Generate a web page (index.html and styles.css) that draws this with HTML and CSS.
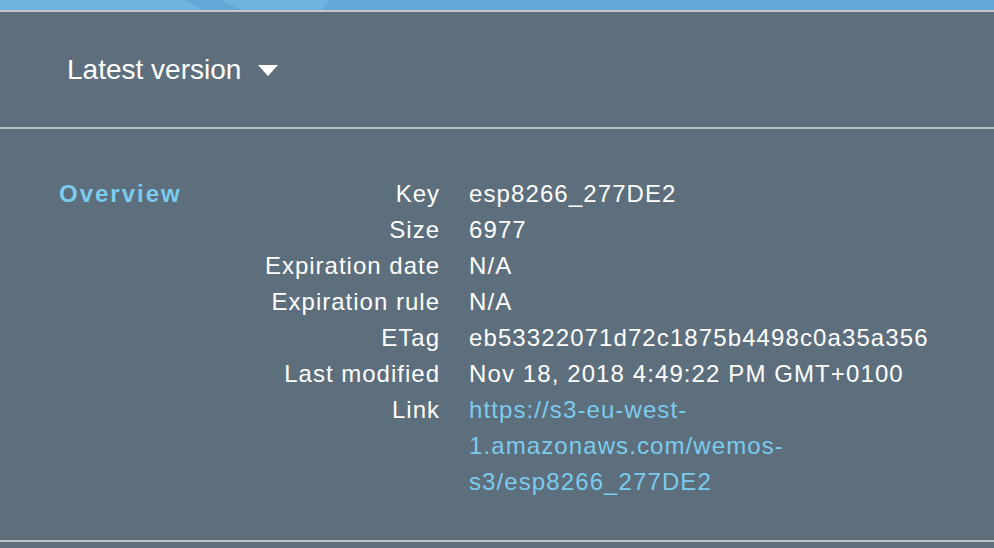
FILE: index.html
```html
<!DOCTYPE html>
<html>
<head>
<meta charset="utf-8">
<link rel="stylesheet" href="styles.css">
</head>
<body>
<div class="topbar">
  <svg class="topbar-art" width="994" height="10" viewBox="0 0 994 10" preserveAspectRatio="none">
    <rect x="0" y="0" width="994" height="10" fill="#63a7d7"/>
    <polygon points="0,0 185,0 204,10 0,10" fill="#6cb3e0"/>
    <polygon points="220,0 330,0 322,10 242,10" fill="#6cb3e0"/>
  </svg>
</div>
<div class="header">
  <span class="version">Latest version</span>
  <svg class="caret" width="20" height="11" viewBox="0 0 20 11"><polygon points="0,0 20,0 10,11" fill="#ffffff"/></svg>
</div>
<div class="content">
  <div class="overview">Overview</div>
  <div class="label r1">Key</div><div class="value r1">esp8266_277DE2</div>
  <div class="label r2">Size</div><div class="value r2">6977</div>
  <div class="label r3">Expiration date</div><div class="value r3">N/A</div>
  <div class="label r4">Expiration rule</div><div class="value r4">N/A</div>
  <div class="label r5">ETag</div><div class="value r5">eb53322071d72c1875b4498c0a35a356</div>
  <div class="label r6">Last modified</div><div class="value r6">Nov 18, 2018 4:49:22 PM GMT+0100</div>
  <div class="label r7">Link</div><div class="value r7"><a class="link" href="#">https://s3-eu-west-<br>1.amazonaws.com/wemos-<br>s3/esp8266_277DE2</a></div>
</div>
</body>
</html>
```
FILE: styles.css
```css
html, body {
  margin: 0;
  padding: 0;
}
body {
  background: #5d6f7d;
  font-family: "Liberation Sans", Arial, Helvetica, sans-serif;
  color: #ffffff;
  width: 994px;
  height: 548px;
  overflow: hidden;
}
.topbar {
  height: 10px;
  border-bottom: 2px solid #c3c7ca;
}
.topbar-art {
  display: block;
}
.header {
  height: 115px;
  display: flex;
  align-items: center;
  padding-left: 67px;
  border-bottom: 2px solid #b9bdc1;
}
.version {
  font-size: 28px;
  line-height: 34px;
  color: #ffffff;
}
.caret {
  display: block;
  margin-left: 17px;
  margin-top: 2px;
}
.content {
  display: grid;
  grid-template-columns: 171px 181px 440px;
  column-gap: 29px;
  padding: 47px 0 40px 59px;
  border-bottom: 2px solid #c0c4c7;
  font-size: 24px;
  line-height: 36px;
}
.overview {
  grid-column: 1;
  grid-row: 1;
  font-weight: bold;
  color: #7ccbee;
  letter-spacing: 2px;
}
.label {
  grid-column: 2;
  text-align: right;
  letter-spacing: 1px;
  white-space: nowrap;
}
.value {
  grid-column: 3;
  letter-spacing: 1.1px;
  white-space: nowrap;
}
.r1 { grid-row: 1; }
.r2 { grid-row: 2; }
.r3 { grid-row: 3; }
.r4 { grid-row: 4; }
.r5 { grid-row: 5; }
.r6 { grid-row: 6; }
.r7 { grid-row: 7; }
.link {
  color: #7ccbee;
  text-decoration: none;
}
```
